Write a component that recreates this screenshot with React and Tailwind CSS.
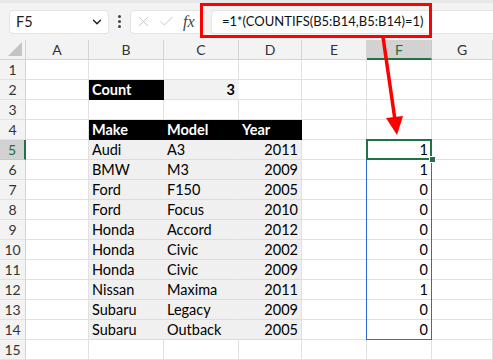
import { ChevronDown, X, Check } from 'lucide-react';

const cols = ['A', 'B', 'C', 'D', 'E', 'F', 'G'];

const cars = [
    ['Audi', 'A3', '2011', '1'],
    ['BMW', 'M3', '2009', '1'],
    ['Ford', 'F150', '2005', '0'],
    ['Ford', 'Focus', '2010', '0'],
    ['Honda', 'Accord', '2012', '0'],
    ['Honda', 'Civic', '2002', '0'],
    ['Honda', 'Civic', '2009', '0'],
    ['Nissan', 'Maxima', '2011', '1'],
    ['Subaru', 'Legacy', '2009', '0'],
    ['Subaru', 'Outback', '2005', '0'],
];

const cell = 'h-[20px] border-r border-b border-[#e1e1e1] px-[3px] flex items-center whitespace-nowrap';

const Cell = ({ children, className = '' }) => (
    <div className={`${cell} ${className}`}>{children}</div>
);

const rowFor = (n) => {
    const car = n >= 5 && n <= 14 ? cars[n - 5] : null;
    const out = [];
    out.push(
        <div key={`h${n}`} className={`h-[20px] border-b flex items-center justify-center text-[14px] ${n === 5 ? 'bg-[#d2d2d2] text-[#1e6b41] border-r-2 border-r-[#217346] border-b-[#c8c8c8]' : 'bg-[#f3f3f3] text-[#333] border-r border-r-[#d4d4d4] border-b-[#e1e1e1]'}`}>
            {n}
        </div>
    );
    out.push(<Cell key={`A${n}`} />);
    if (n === 2) {
        out.push(<Cell key={`B${n}`} className="bg-black border-r-black border-b-black text-white font-bold">Count</Cell>);
        out.push(<Cell key={`C${n}`} className="bg-[#f2f2f2] border-r-[#f2f2f2] justify-end font-bold">3</Cell>);
        out.push(<Cell key={`D${n}`} />);
    } else if (n === 4) {
        out.push(<Cell key={`B${n}`} className="bg-black border-r-black border-b-black text-white font-bold">Make</Cell>);
        out.push(<Cell key={`C${n}`} className="bg-black border-r-black border-b-black text-white font-bold">Model</Cell>);
        out.push(<Cell key={`D${n}`} className="bg-black border-r-black border-b-black text-white font-bold">Year</Cell>);
    } else if (car) {
        out.push(<Cell key={`B${n}`} className="bg-[#f0f0f0] border-r-[#f0f0f0] border-b-[#dcdcdc]">{car[0]}</Cell>);
        out.push(<Cell key={`C${n}`} className="bg-[#f0f0f0] border-r-[#f0f0f0] border-b-[#dcdcdc]">{car[1]}</Cell>);
        out.push(<Cell key={`D${n}`} className="bg-[#f0f0f0] border-b-[#dcdcdc] justify-end">{car[2]}</Cell>);
    } else {
        out.push(<Cell key={`B${n}`} />, <Cell key={`C${n}`} />, <Cell key={`D${n}`} />);
    }
    out.push(<Cell key={`E${n}`} />);
    out.push(
        <Cell key={`F${n}`} className={`justify-end ${n === 5 ? 'relative' : ''}`}>
            {car ? car[3] : ''}
            {n === 5 && (
                <>
                    {/* range outline F5:F14 */}
                    <span className="absolute z-10 left-[-1px] top-[-1px] w-[66px] h-[201px] border border-[#2e6bd1] pointer-events-none" />
                    {/* active cell */}
                    <span className="absolute z-10 left-[-1px] top-[-1px] w-[66px] h-[21px] border-2 border-[#217346] pointer-events-none" />
                    <span className="absolute z-10 right-[-5px] bottom-[-4px] w-[7px] h-[7px] bg-[#217346] border border-white" />
                </>
            )}
        </Cell>
    );
    out.push(<Cell key={`G${n}`} />);
    return out;
};

const App = () => {
    return (
        <div className="relative w-[493px] h-[360px] overflow-hidden bg-white text-[14.5px] text-black" style={{ fontFamily: 'Lato, "Open Sans", sans-serif' }}>
            {/* formula bar */}
            <div className="h-[40px] bg-[#f3f3f3] border-t-[3px] border-[#e8e8e8] flex items-center gap-[8px] pl-[9px]">
                <div className="w-[100px] h-[24px] bg-white rounded-[4px] border border-[#e3e3e3] flex items-center justify-between pl-[6px] pr-[4px] text-[#222]">
                    <span>F5</span>
                    <ChevronDown size={14} strokeWidth={2.5} />
                </div>
                <div className="flex flex-col gap-[2px] mx-[1px]">
                    <span className="w-[3px] h-[3px] rounded-full bg-[#444]" />
                    <span className="w-[3px] h-[3px] rounded-full bg-[#444]" />
                    <span className="w-[3px] h-[3px] rounded-full bg-[#444]" />
                </div>
                <div className="w-[73px] h-[24px] bg-white rounded-[4px] border border-[#e3e3e3] flex items-center pl-[4px] gap-[6px] text-[#c4c4c4]">
                    <X size={17} strokeWidth={1.3} />
                    <Check size={17} strokeWidth={1.3} />
                    <span className="text-[#444] italic text-[16px] ml-[2px]" style={{ fontFamily: '"Liberation Serif", serif' }}>fx</span>
                </div>
                <div className="flex-1 h-[24px] bg-white rounded-l-[4px] border border-r-0 border-[#e3e3e3] flex items-center pl-[10px] text-[13px] text-[#111]">
                    =1*(COUNTIFS(B5:B14,B5:B14)=1)
                </div>
            </div>

            {/* sheet */}
            <div className="grid grid-cols-[26px_63px_75px_75px_63px_65px_65px_61px] grid-rows-[20px_repeat(15,20px)]">
                <div className="bg-[#f3f3f3] border-r border-b border-[#d4d4d4] flex items-end justify-end p-[3px]">
                    <svg width="14" height="14" viewBox="0 0 14 14"><polygon points="14,0 14,14 0,14" fill="#c4c4c4" /></svg>
                </div>
                {cols.map(c => (
                    <div key={c} className={`h-[20px] border-r border-b flex items-center justify-center text-[14px] ${c === 'F' ? 'bg-[#d2d2d2] text-[#1e6b41] border-r-[#c8c8c8] border-b-2 border-b-[#217346]' : 'bg-[#f3f3f3] text-[#333] border-[#d4d4d4]'}`}>
                        {c}
                    </div>
                ))}
                {Array.from({ length: 15 }, (_, i) => rowFor(i + 1))}
            </div>

            {/* annotation */}
            <svg className="absolute z-20 left-0 top-0 pointer-events-none" width="493" height="360">
                <rect x="201.5" y="4.5" width="229" height="32" fill="none" stroke="#ff0000" strokeWidth="3" />
                <line x1="383" y1="37" x2="395" y2="120" stroke="#ff0000" strokeWidth="3.5" />
                <polygon points="386,118 403,116 397,135" fill="#ff0000" />
            </svg>
        </div>
    );
};

export default App;
